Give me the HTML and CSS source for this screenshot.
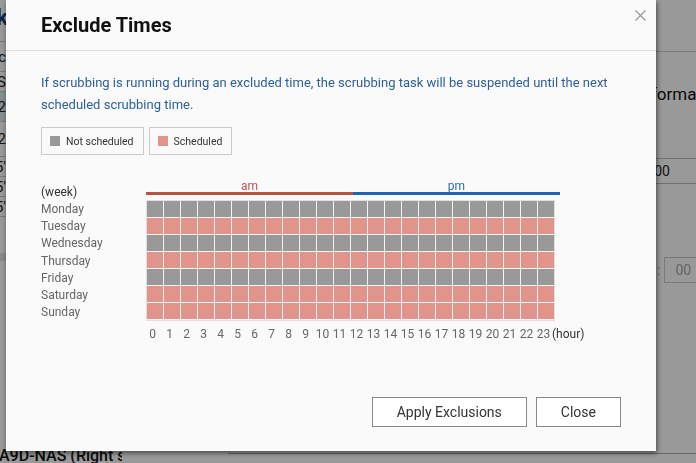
FILE: index.html
```html
<!DOCTYPE html>
<html>
<head>
<meta charset="utf-8">
<title>Exclude Times</title>
<link rel="stylesheet" href="styles.css">
</head>
<body>

<div class="page">
  <aside class="side">
    <h2 class="side-title"><span>Disk</span></h2>
    <div class="side-row tall"><span>Spec</span></div>
    <div class="side-row"><span>NAS</span></div>
    <div class="side-row tall picked"><span>12</span></div>
    <div class="side-row taller"><span>12</span></div>
    <div class="side-row"><span>5'</span></div>
    <div class="side-row"><span>5'</span></div>
    <div class="side-row"><span>5'</span></div>
    <div class="side-bar"></div>
    <div class="side-foot">A9D-NAS (Right side)</div>
  </aside>

  <main class="main">
    <div class="main-head"></div>
    <h3 class="main-title">Disk Information</h3>
    <div class="info-row"><span class="info-key">Start</span><span class="info-val">12:00</span></div>
    <div class="picker">
      <span class="picker-box">00</span>
      <span class="picker-sep">:</span>
      <span class="picker-box">00</span>
    </div>
  </main>
</div>

<div class="backdrop"></div>

<div class="modal">
  <div class="modal-head">
    <h1 class="modal-title">Exclude Times</h1>
    <button class="modal-close" type="button">
      <svg width="11" height="11" viewBox="0 0 11 11"><path d="M0.5 0.5L10.5 10.5M10.5 0.5L0.5 10.5" stroke="#999" stroke-width="1.2" fill="none"/></svg>
    </button>
  </div>

  <div class="modal-body">
    <p class="notice">If scrubbing is running during an excluded time, the scrubbing task will be suspended until the next scheduled scrubbing time.</p>

    <div class="legend">
      <span class="legend-item"><i class="swatch off"></i>Not scheduled</span>
      <span class="legend-item"><i class="swatch on"></i>Scheduled</span>
    </div>

    <div class="chart">
      <div class="week">(week)</div>
      <div class="halves">
        <span class="half am">am</span>
        <span class="half pm">pm</span>
      </div>

      <div class="days">
        <div>Monday</div>
        <div>Tuesday</div>
        <div>Wednesday</div>
        <div>Thursday</div>
        <div>Friday</div>
        <div>Saturday</div>
        <div>Sunday</div>
      </div>
      <div class="cells" id="cells"></div>

      <div></div>
      <div class="hours" id="hours"></div>
    </div>
  </div>

  <div class="modal-foot">
    <button class="btn" type="button">Apply Exclusions</button>
    <button class="btn" type="button">Close</button>
  </div>
</div>

<script src="script.js"></script>
</body>
</html>
```

FILE: styles.css
```css
* {
  box-sizing: border-box;
}

html, body {
  margin: 0;
  height: 100%;
  overflow: hidden;
}

body {
  font-family: Roboto, "Liberation Sans", sans-serif;
  background: #fff;
  color: #222;
}

/* page behind the dialog */
.page {
  display: flex;
  height: 100%;
}

.side {
  width: 228px;
  display: flex;
  flex-direction: column;
}

.side-title {
  margin: 0;
  height: 42px;
  border-bottom: 1px solid #ccc;
  display: flex;
  justify-content: flex-end;
  width: 8px;
  font-size: 22px;
  line-height: 36px;
  color: #1a3b70;
  white-space: nowrap;
}

.side-row {
  display: flex;
  justify-content: flex-end;
  align-items: center;
  width: 228px;
  height: 20px;
  padding-right: 222px;
  border-bottom: 1px solid #ccc;
  font-size: 15px;
  white-space: nowrap;
}

.side-row.tall {
  height: 30px;
}

.side-row.taller {
  height: 35px;
}

.side-row.picked {
  background: #dfeeee;
}

.side-bar {
  height: 8px;
  margin-top: 36px;
  background: #e6e6e6;
}

.side-foot {
  margin-top: auto;
  margin-bottom: -3px;
  margin-left: -1px;
  width: 123px;
  overflow: hidden;
  white-space: nowrap;
  font-size: 16px;
  font-weight: 500;
  line-height: 20px;
  color: #111;
}

.main {
  flex: 1;
  height: 454px;
  border-bottom: 1px solid #aaa;
}

.main-head {
  height: 52px;
  border-bottom: 1px solid #ccc;
}

.main-title {
  margin: 32px 0 0 372px;
  font-size: 17px;
  font-weight: 400;
  line-height: 20px;
  white-space: nowrap;
  color: #111;
}

.info-row {
  display: flex;
  margin: 54px 0 0 300px;
  height: 26px;
  align-items: center;
  border-top: 1px solid #bbb;
  border-bottom: 1px solid #bbb;
  font-size: 14px;
  white-space: nowrap;
}

.info-key {
  width: 107px;
}

.picker {
  display: flex;
  align-items: center;
  gap: 4px;
  margin: 73px 0 0 385px;
  font-size: 14px;
}

.picker-box {
  width: 40px;
  height: 26px;
  border: 1px solid #ccc;
  display: flex;
  align-items: center;
  padding-left: 10px;
  color: #aaa;
}

.picker-sep {
  color: #aaa;
}

.backdrop {
  position: fixed;
  inset: 0;
  background: rgba(0, 0, 0, 0.4);
}

/* dialog */
.modal {
  position: fixed;
  left: 6px;
  top: 0;
  width: 650px;
  height: 451px;
  background: #fafafa;
  box-shadow: 1px 2px 5px rgba(0, 0, 0, 0.55);
  display: flex;
  flex-direction: column;
}

.modal-head {
  position: relative;
  height: 51px;
  padding: 0 35px;
  border-bottom: 1px solid #ddd;
  display: flex;
  align-items: center;
}

.modal-title {
  margin: 0;
  font-size: 20px;
  font-weight: 700;
  color: #111;
}

.modal-close {
  position: absolute;
  top: 10px;
  right: 10px;
  width: 11px;
  height: 11px;
  padding: 0;
  border: 0;
  background: none;
  cursor: pointer;
}

.modal-close svg {
  display: block;
}

.modal-body {
  padding: 21px 35px 0;
}

.notice {
  margin: 0;
  font-size: 13px;
  line-height: 22px;
  color: #2d5f9a;
}

.legend {
  display: flex;
  gap: 5px;
  margin-top: 11px;
}

.legend-item {
  display: flex;
  align-items: center;
  gap: 6px;
  height: 28px;
  padding: 0 9px 0 8px;
  border: 1px solid #ccc;
  font-size: 10.5px;
  color: #333;
}

.swatch {
  width: 10px;
  height: 10px;
}

.swatch.off,
.cell.off {
  background: #999;
}

.swatch.on,
.cell.on {
  background: #e0948b;
}

.chart {
  display: grid;
  grid-template-columns: 105px auto;
  margin-top: 25px;
}

.week {
  align-self: end;
  margin-bottom: -1px;
  font-size: 12px;
  line-height: 17px;
  color: #333;
}

.halves {
  display: grid;
  grid-template-columns: 207px 207px;
  margin-bottom: 5px;
}

.half {
  text-align: center;
  font-size: 12px;
  line-height: 12px;
  border-bottom: 3px solid;
}

.half.am {
  color: #c0584a;
  border-color: #b9533f;
}

.half.pm {
  color: #2e6bb5;
  border-color: #1f63b6;
}

.days {
  padding-top: 1px;
  font-size: 12px;
  line-height: 17.2px;
  color: #666;
}

.cells {
  display: grid;
  grid-template-columns: repeat(24, 16px);
  grid-auto-rows: 16px;
  gap: 1px;
  width: 409px;
  border: 1px solid #e0e0e0;
  background: #f3f3f3;
}

.hours {
  display: flex;
  margin: 5px 0 0 -2px;
  font-size: 12px;
  line-height: 17px;
  color: #666;
}

.hour {
  width: 17px;
  text-align: center;
}

.hour-unit {
  color: #333;
}

.modal-foot {
  margin-top: auto;
  display: flex;
  justify-content: flex-end;
  gap: 9px;
  padding: 0 35px 24px;
}

.btn {
  height: 30px;
  padding: 0 24px;
  border: 1px solid #888;
  background: #fff;
  font-family: Roboto, "Liberation Sans", sans-serif;
  font-size: 14px;
  color: #333;
}
```

FILE: script.js
```js
// 1 = scheduled, 0 = excluded, one entry per weekday
var week = [0, 1, 0, 1, 0, 1, 1];

var cells = document.getElementById('cells');
var hours = document.getElementById('hours');
var d, h, el;

for (d = 0; d < week.length; d++) {
  for (h = 0; h < 24; h++) {
    el = document.createElement('div');
    el.className = 'cell ' + (week[d] ? 'on' : 'off');
    cells.appendChild(el);
  }
}

for (h = 0; h < 24; h++) {
  el = document.createElement('span');
  el.className = 'hour';
  el.textContent = h;
  hours.appendChild(el);
}

el = document.createElement('span');
el.className = 'hour-unit';
el.textContent = '(hour)';
hours.appendChild(el);
```
